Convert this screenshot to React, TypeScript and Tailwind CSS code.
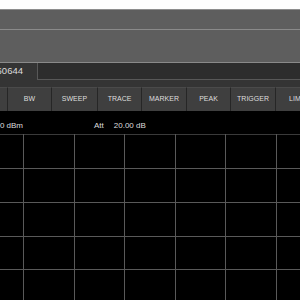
import React from "react";

const buttons: { label: string; w: string }[] = [
  { label: "", w: "w-[8px]" },
  { label: "BW", w: "w-[44px]" },
  { label: "SWEEP", w: "w-[46px]" },
  { label: "TRACE", w: "w-[44px]" },
  { label: "MARKER", w: "w-[45px]" },
  { label: "PEAK", w: "w-[44px]" },
  { label: "TRIGGER", w: "w-[45px]" },
  { label: "LIMIT", w: "w-[45px]" },
];

export default function App() {
  const vx = [23, 74, 124, 175, 225, 276];
  const hy = [34, 68, 102, 135, 169];
  return (
    <div
      className="w-[300px] h-[300px] overflow-hidden flex flex-col bg-black"
      style={{ fontFamily: '"Liberation Sans", Arial, sans-serif' }}
    >
      <div className="h-[9px] bg-white shrink-0" />
      <div className="h-[20px] shrink-0 bg-[#5e5e5e] border-t border-[#8e8e8e]" />
      <div className="h-[34px] shrink-0 bg-[#5e5e5e] border-t border-b border-[#8a8a8a]" />
      <div className="h-[24px] shrink-0 bg-[#343434] flex">
        <div className="w-[37px] h-[17px] flex items-center justify-end pr-[14px] whitespace-nowrap text-[9.5px] text-[#dcdcdc]">
          60644
        </div>
        <div className="flex-1 h-[17px] bg-[#2d2d2d] border-l border-b border-[#585858]" />
      </div>
      <div className="h-[24px] shrink-0 bg-[#2a2a2a] flex">
        {buttons.map((b, i) => (
          <div
            key={i}
            className={`${b.w} shrink-0 h-full flex items-center justify-center bg-[#3f3f3f] border-r border-[#262626] text-[7px] text-[#dedede] whitespace-nowrap overflow-hidden border-t border-t-[#4a4a4a]`}
          >
            {b.label}
          </div>
        ))}
      </div>
      <div className="h-[23px] shrink-0 flex items-center text-[8px] text-[#dddddd] whitespace-nowrap pt-[7px]">
        <div className="w-[23px] flex justify-end">
          <span>Ref -10.00 dBm</span>
        </div>
        <span className="ml-[71px]">Att</span>
        <span className="ml-[10px]">20.00 dB</span>
      </div>
      <div className="flex-1 relative">
        <svg width="300" height="170" className="block">
          <line x1="0" y1="0.5" x2="300" y2="0.5" stroke="#3a3a3a" />
          {vx.map((x) => (
            <line key={x} x1={x + 0.5} y1="0" x2={x + 0.5} y2="170" stroke="#595959" />
          ))}
          {hy.map((y) => (
            <line key={y} x1="0" y1={y + 0.5} x2="300" y2={y + 0.5} stroke="#595959" />
          ))}
        </svg>
      </div>
    </div>
  );
}
